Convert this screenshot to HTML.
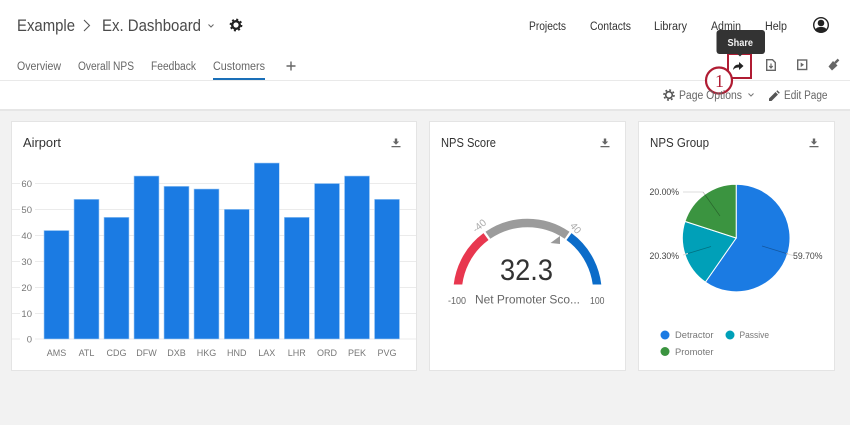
<!DOCTYPE html>
<html><head><meta charset="utf-8"><style>
html,body{margin:0;padding:0;width:850px;height:425px;overflow:hidden;background:#f2f2f2}
svg{display:block;fill:#444}
text{font-family:"Liberation Sans",sans-serif}
</style></head><body>
<svg width="850" height="425" viewBox="0 0 850 425" xmlns="http://www.w3.org/2000/svg">
<defs><clipPath id="g"><rect x="440" y="210" width="175" height="74.500"/></clipPath></defs>
<rect x="0" y="0" width="850" height="110" fill="#fff"/>
<rect x="0" y="80" width="850" height="1" fill="#e9e9e9"/>
<rect x="0" y="109" width="850" height="2" fill="#e6e6e6"/>

<!-- header -->
<text x="17" y="31" font-size="17" textLength="58" lengthAdjust="spacingAndGlyphs" fill="#4a4a4a">Example</text>
<path d="M84 20l5.500 5.500-5.500 5.500" fill="none" stroke="#555" stroke-width="1.100"/>
<text x="102" y="31" font-size="17" textLength="99" lengthAdjust="spacingAndGlyphs" fill="#4a4a4a">Ex. Dashboard</text>
<path d="M208.500 24.500l2.500 2.500 2.500-2.500" fill="none" stroke="#666" stroke-width="1"/>
<circle cx="236" cy="25" r="3.800" fill="none" stroke="#222" stroke-width="2.400"/>
<circle cx="236" cy="25" r="5.500" fill="none" stroke="#222" stroke-width="1.800" stroke-dasharray="2 2.320"/>

<text x="529" y="30" font-size="11.500" textLength="37" lengthAdjust="spacingAndGlyphs" fill="#333">Projects</text>
<text x="590" y="30" font-size="11.500" textLength="41" lengthAdjust="spacingAndGlyphs" fill="#333">Contacts</text>
<text x="654" y="30" font-size="11.500" textLength="33" lengthAdjust="spacingAndGlyphs" fill="#333">Library</text>
<text x="711" y="30" font-size="11.500" textLength="30" lengthAdjust="spacingAndGlyphs" fill="#333">Admin</text>
<text x="765" y="30" font-size="11.500" textLength="22" lengthAdjust="spacingAndGlyphs" fill="#333">Help</text>
<circle cx="821" cy="25" r="7.300" fill="#fff" stroke="#222" stroke-width="1.400"/>
<circle cx="821" cy="23" r="3.300" fill="#222"/>
<path d="M815 30.500c1-3 3-3.500 6-3.500s5 .5 6 3.500c-1.500 1.500-3.500 2-6 2s-4.500-.5-6-2z" fill="#222"/>

<!-- tabs -->
<text x="17" y="70" font-size="11.500" textLength="44" lengthAdjust="spacingAndGlyphs" fill="#666">Overview</text>
<text x="78" y="70" font-size="11.500" textLength="56" lengthAdjust="spacingAndGlyphs" fill="#666">Overall NPS</text>
<text x="151" y="70" font-size="11.500" textLength="45" lengthAdjust="spacingAndGlyphs" fill="#666">Feedback</text>
<text x="213" y="70" font-size="11.500" textLength="52" lengthAdjust="spacingAndGlyphs" fill="#666">Customers</text>
<rect x="213" y="78" width="52" height="2" fill="#1a6fb8"/>
<path d="M291 61.500v9M286.500 66h9" stroke="#666" stroke-width="1.400"/>

<!-- toolbar icons -->
<path d="M733 70c.5-4 3-5.500 6-5.500v-2.500l4.500 4-4.500 4v-2.500c-2.500 0-4.500.5-6 2.500z" fill="#222"/>
<path d="M766.700 59.700h5.800l2.800 2.800v7.800h-8.600z" fill="none" stroke="#666" stroke-width="1.400"/>
<path d="M771 63.500v4M769.300 66l1.700 2 1.700-2" fill="none" stroke="#666" stroke-width="1.200"/>
<rect x="797.700" y="60" width="9" height="9.500" fill="none" stroke="#666" stroke-width="1.400"/>
<path d="M800.700 62.500l3.300 2.300-3.300 2.300z" fill="#666"/>
<path d="M828.500 66.500l4.500-5.500 4.500 4.500-5.500 5z" fill="#666"/>
<path d="M835 63l3.500-3.500" stroke="#666" stroke-width="2.400"/>

<!-- red box + tooltip -->
<rect x="728" y="54" width="23" height="24" fill="none" stroke="#b01c33" stroke-width="2"/>
<rect x="716.500" y="30" width="48.500" height="24" rx="3" fill="#333"/>
<path d="M737.500 54l2.500 2.500 2.500-2.500z" fill="#333"/>
<text x="727.500" y="46" font-size="10.500" font-weight="bold" textLength="25.500" lengthAdjust="spacingAndGlyphs" fill="#f4f4f4">Share</text>
<circle cx="719" cy="80.500" r="13" fill="#fff" stroke="#b01c33" stroke-width="2.200"/>
<text x="715" y="87" font-size="18" style="font-family:'Liberation Serif',serif;fill:#b01c33">1</text>

<!-- page options -->
<circle cx="669" cy="95" r="3.300" fill="none" stroke="#555" stroke-width="1.600"/>
<circle cx="669" cy="95" r="5" fill="none" stroke="#555" stroke-width="1.600" stroke-dasharray="1.900 2.030"/>
<text x="679" y="99" font-size="11.500" textLength="63" lengthAdjust="spacingAndGlyphs" fill="#666">Page Options</text>
<path d="M748.500 93.500l2.500 2.500 2.500-2.500" fill="none" stroke="#777" stroke-width="1"/>
<path d="M769 101v-2.500l6.500-6.500 2.500 2.500-6.500 6.500zM776.300 91.200l1-1 2.500 2.500-1 1z" fill="#555"/>
<text x="784" y="99" font-size="11.500" textLength="43.500" lengthAdjust="spacingAndGlyphs" fill="#666">Edit Page</text>

<!-- cards -->
<g fill="#fff" stroke="#e4e4e4" stroke-width="1">
<rect x="11.500" y="121.500" width="405" height="249"/>
<rect x="429.500" y="121.500" width="196" height="249"/>
<rect x="638.500" y="121.500" width="196" height="249"/>
</g>
<text x="23" y="147" font-size="12.500" textLength="38" lengthAdjust="spacingAndGlyphs" fill="#333">Airport</text>
<text x="441" y="147" font-size="12.500" textLength="55" lengthAdjust="spacingAndGlyphs" fill="#333">NPS Score</text>
<text x="650" y="147" font-size="12.500" textLength="59" lengthAdjust="spacingAndGlyphs" fill="#333">NPS Group</text>
<g fill="#666">
<path d="M394.800 138.500h2.400v3h2l-3.200 3.300-3.200-3.300h2zM391.500 146h9v1.300h-9z"/>
<path d="M603.800 138.500h2.400v3h2l-3.200 3.300-3.200-3.300h2zM600.500 146h9v1.300h-9z"/>
<path d="M812.800 138.500h2.400v3h2l-3.200 3.300-3.200-3.300h2zM809.500 146h9v1.300h-9z"/>
</g>

<!-- bar chart -->
<g fill="#ebebeb">
<rect x="12" y="183" width="404" height="1"/><rect x="12" y="209" width="404" height="1"/>
<rect x="12" y="235" width="404" height="1"/><rect x="12" y="261" width="404" height="1"/>
<rect x="12" y="287" width="404" height="1"/><rect x="12" y="313" width="404" height="1"/>
<rect x="12" y="338.500" width="404" height="1"/>
</g>
<g fill="#fff">
<rect x="20" y="178" width="15" height="12"/><rect x="20" y="204" width="15" height="12"/>
<rect x="20" y="230" width="15" height="12"/><rect x="20" y="256" width="15" height="12"/>
<rect x="20" y="282" width="15" height="12"/><rect x="20" y="308" width="15" height="12"/>
<rect x="20" y="334" width="15" height="12"/>
</g>
<g font-size="9.500" text-anchor="end" fill="#777">
<text x="32" y="187">60</text><text x="32" y="213">50</text>
<text x="32" y="239">40</text><text x="32" y="265">30</text>
<text x="32" y="291">20</text><text x="32" y="317">10</text>
<text x="32" y="342.500">0</text>
</g>
<g fill="#1b7be3" stroke="#a9cff5" stroke-width="0.600">
<rect x="44" y="230.500" width="25" height="108.500"/>
<rect x="74" y="199.300" width="25" height="139.700"/>
<rect x="104" y="217.300" width="25" height="121.700"/>
<rect x="134" y="176" width="25" height="163"/>
<rect x="164" y="186.300" width="25" height="152.700"/>
<rect x="194" y="189" width="25" height="150"/>
<rect x="224.300" y="209.300" width="25" height="129.700"/>
<rect x="254.300" y="163" width="25" height="176"/>
<rect x="284.300" y="217.300" width="25" height="121.700"/>
<rect x="314.500" y="183.500" width="25" height="155.500"/>
<rect x="344.500" y="176" width="25" height="163"/>
<rect x="374.500" y="199.300" width="25" height="139.700"/>
</g>
<g font-size="9" text-anchor="middle" fill="#777">
<text x="56.500" y="356">AMS</text><text x="86.500" y="356">ATL</text>
<text x="116.500" y="356">CDG</text><text x="146.500" y="356">DFW</text>
<text x="176.500" y="356">DXB</text><text x="206.500" y="356">HKG</text>
<text x="236.800" y="356">HND</text><text x="266.800" y="356">LAX</text>
<text x="296.800" y="356">LHR</text><text x="327" y="356">ORD</text>
<text x="357" y="356">PEK</text><text x="387" y="356">PVG</text>
</g>

<!-- gauge -->
<g fill="none" stroke-width="8.500" clip-path="url(#g)">
<path d="M457.500 293A70 70 0 0 1 486 236.600" stroke="#e8374f"/>
<path d="M487.900 235.300A70 70 0 0 1 567.100 235.300" stroke="#9b9b9b"/>
<path d="M569 236.600A70 70 0 0 1 597.500 293" stroke="#0b6cc9"/>
</g>
<path d="M550.500 243l9.500-7v8z" fill="#999"/>
<text x="500" y="280" font-size="30" textLength="53" lengthAdjust="spacingAndGlyphs" fill="#333">32.3</text>
<text x="475" y="303.500" font-size="12" textLength="105" lengthAdjust="spacingAndGlyphs" fill="#666">Net Promoter Sco...</text>
<text x="448" y="304" font-size="10" textLength="18" lengthAdjust="spacingAndGlyphs" fill="#666">-100</text>
<text x="590" y="304" font-size="10" textLength="14.500" lengthAdjust="spacingAndGlyphs" fill="#666">100</text>
<text transform="translate(476 233) rotate(-40)" font-size="10" fill="#aaa">-40</text>
<text transform="translate(569.500 226) rotate(50)" font-size="10" fill="#aaa">40</text>

<!-- pie -->
<g stroke="#fff" stroke-width="1">
<path d="M736.200 238V184.200A53.800 53.800 0 1 1 705.400 282.100Z" fill="#1b7be3"/>
<path d="M736.200 238L705.400 282.100A53.800 53.800 0 0 1 685 221.400Z" fill="#00a0b8"/>
<path d="M736.200 238L685 221.400A53.800 53.800 0 0 1 736.200 184.200Z" fill="#3b9440"/>
</g>
<path d="M683 192h20M683 255l5-1.500M786 253.500l7 2" fill="none" stroke="#ddd" stroke-width="1"/>
<path d="M703 192l17 24M688 253.500l23-7M762 246l26 8" fill="none" stroke="#000" stroke-opacity=".3" stroke-width="0.700"/>
<text x="649.500" y="195" font-size="9.500" textLength="29.500" lengthAdjust="spacingAndGlyphs" fill="#444">20.00%</text>
<text x="649.500" y="259" font-size="9.500" textLength="29.500" lengthAdjust="spacingAndGlyphs" fill="#444">20.30%</text>
<text x="793" y="259" font-size="9.500" textLength="29.500" lengthAdjust="spacingAndGlyphs" fill="#444">59.70%</text>
<circle cx="665" cy="335" r="4.500" fill="#1b7be3"/>
<circle cx="730" cy="335" r="4.500" fill="#00a0b8"/>
<circle cx="665" cy="351.500" r="4.500" fill="#3b9440"/>
<text x="675" y="338" font-size="9.500" textLength="38.500" lengthAdjust="spacingAndGlyphs" fill="#777">Detractor</text>
<text x="739.500" y="338" font-size="9.500" textLength="29.500" lengthAdjust="spacingAndGlyphs" fill="#777">Passive</text>
<text x="675" y="355" font-size="9.500" textLength="38.500" lengthAdjust="spacingAndGlyphs" fill="#777">Promoter</text>
</svg>
</body></html>
